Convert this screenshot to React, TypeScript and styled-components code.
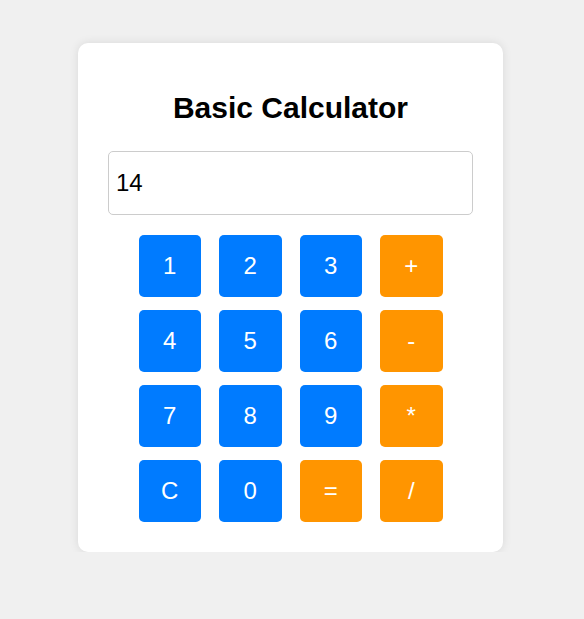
import React, {useState} from 'react';
import styled, {createGlobalStyle} from 'styled-components';

const GlobalStyle = createGlobalStyle`
  body {
    margin: 0;
    background: #f0f0f0;
    font-family: "Liberation Sans", Arial, sans-serif;
  }
`;

const Page = styled.div`
  display: flex;
  justify-content: center;
  padding: 43px 3px 0 0;
`;

const Card = styled.div`
  width: 425px;
  box-sizing: border-box;
  padding: 30px;
  background: white;
  border-radius: 10px;
  box-shadow: 0 0 10px rgba(0, 0, 0, 0.1);
`;

const Title = styled.h2`
  margin: 18px 0 26px;
  text-align: center;
  font-size: 30px;
  font-weight: bold;
  color: #000;
  line-height: 34px;
`;

const Display = styled.input`
  display: block;
  width: 100%;
  height: 64px;
  box-sizing: border-box;
  padding: 0 7px;
  font-size: 24px;
  font-family: "Liberation Sans", Arial, sans-serif;
  border: 1px solid #ccc;
  border-radius: 5px;
  color: #000;
  outline: none;
`;

const Keys = styled.div`
  display: grid;
  grid-template-columns: repeat(4, 62.5px);
  grid-auto-rows: 62px;
  column-gap: 18px;
  row-gap: 13px;
  justify-content: center;
  margin-top: 20px;
`;

const Key = styled.button<{$op?: boolean}>`
  border: none;
  border-radius: 5px;
  background: ${p => (p.$op ? '#ff9500' : '#007bff')};
  color: white;
  font-size: 24px;
  font-family: "Liberation Sans", Arial, sans-serif;
  cursor: pointer;
  padding: 0;
`;

const keys = ['1', '2', '3', '+', '4', '5', '6', '-', '7', '8', '9', '*', 'C', '0', '=', '/'];
const ops = ['+', '-', '*', '/', '='];

export default function App() {
  const [value, setValue] = useState('14');

  const press = (k: string) => {
    if (k === 'C') return setValue('');
    if (k === '=') {
      try {
        // eslint-disable-next-line no-new-func
        setValue(String(Function('return (' + value + ')')()));
      } catch {
        setValue('Error');
      }
      return;
    }
    setValue(v => v + k);
  };

  return (
    <Page>
      <GlobalStyle/>
      <Card>
        <Title>Basic Calculator</Title>
        <Display value={value} readOnly/>
        <Keys>
          {keys.map(k => (
            <Key key={k} $op={ops.includes(k)} onClick={() => press(k)}>{k}</Key>
          ))}
        </Keys>
      </Card>
    </Page>
  );
}
